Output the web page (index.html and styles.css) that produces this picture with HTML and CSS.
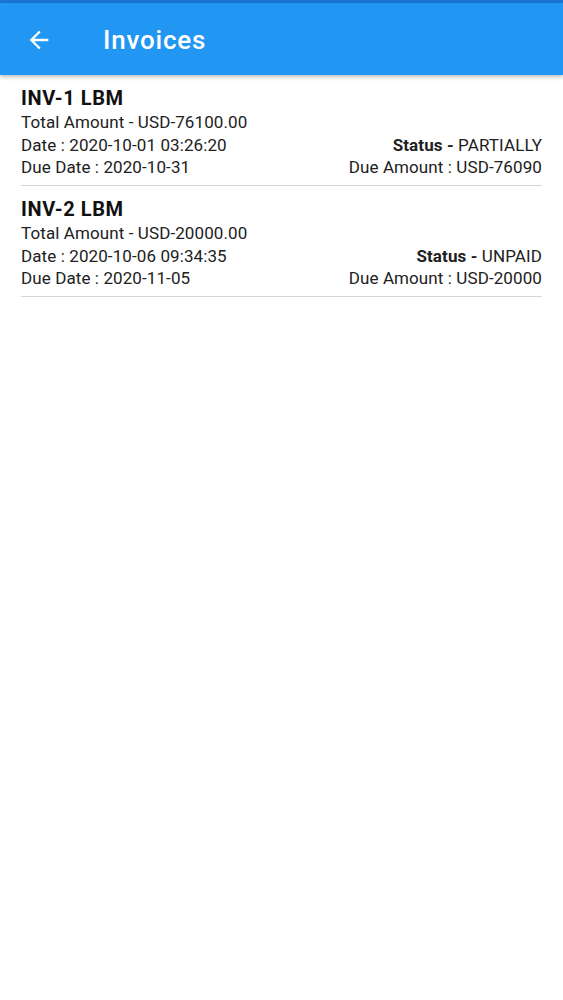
FILE: index.html
```html
<!DOCTYPE html>
<html lang="en">
<head>
  <meta charset="UTF-8">
  <meta name="viewport" content="width=device-width, initial-scale=1.0">
  <title>Invoices</title>
  <link rel="stylesheet" href="styles.css">
</head>
<body>

<div class="status-strip"></div>
<header class="app-bar">
  <button class="back-btn" aria-label="Back">
    <svg width="24" height="24" viewBox="0 0 24 24">
      <path d="M20 11H7.83l5.59-5.59L12 4l-8 8 8 8 1.41-1.41L7.83 13H20v-2z" fill="#fff"/>
    </svg>
  </button>
  <h1>Invoices</h1>
</header>

<ul class="invoice-list">
  <li class="invoice">
    <div class="invoice-title">INV-1 LBM</div>
    <div class="row">Total Amount - USD-76100.00</div>
    <div class="row">
      <span>Date : 2020-10-01 03:26:20</span>
      <span><b>Status - </b>PARTIALLY</span>
    </div>
    <div class="row">
      <span>Due Date : 2020-10-31</span>
      <span>Due Amount : USD-76090</span>
    </div>
  </li>
  <li class="invoice">
    <div class="invoice-title">INV-2 LBM</div>
    <div class="row">Total Amount - USD-20000.00</div>
    <div class="row">
      <span>Date : 2020-10-06 09:34:35</span>
      <span><b>Status - </b>UNPAID</span>
    </div>
    <div class="row">
      <span>Due Date : 2020-11-05</span>
      <span>Due Amount : USD-20000</span>
    </div>
  </li>
</ul>

</body>
</html>
```

FILE: styles.css
```css
body {
  font-family: 'Roboto', 'Liberation Sans', sans-serif;
  background: #fff;
  color: #212121;
  margin: 0;
  padding: 0;
}
.status-strip {
  height: 3px;
  background-color: #1976d2;
}
.app-bar {
  display: flex;
  align-items: center;
  height: 72px;
  background-color: #2196f3;
  box-shadow: 0 2px 4px rgba(0, 0, 0, 0.25);
  position: relative;
}
.back-btn {
  display: flex;
  align-items: center;
  justify-content: center;
  width: 28px;
  height: 28px;
  margin: 2px 0 0 25px;
  padding: 0;
  border: none;
  background: none;
}
.back-btn svg {
  width: 28px;
  height: 28px;
}
.app-bar h1 {
  margin: 2px 0 0 50px;
  color: #fff;
  font-size: 26px;
  font-weight: 500;
  letter-spacing: 0.8px;
}
.invoice-list {
  list-style: none;
  margin: 0 21px;
  padding: 0;
}
.invoice {
  padding: 11px 0 6.5px;
  border-bottom: 1.5px solid #d6d6d6;
}
.invoice-title {
  font-size: 20px;
  font-weight: 700;
  line-height: 25px;
  letter-spacing: 0.6px;
  color: #111;
}
.row {
  display: flex;
  justify-content: space-between;
  font-size: 17px;
  line-height: 22.5px;
  letter-spacing: 0.1px;
}
.row b {
  font-weight: 700;
}
```
